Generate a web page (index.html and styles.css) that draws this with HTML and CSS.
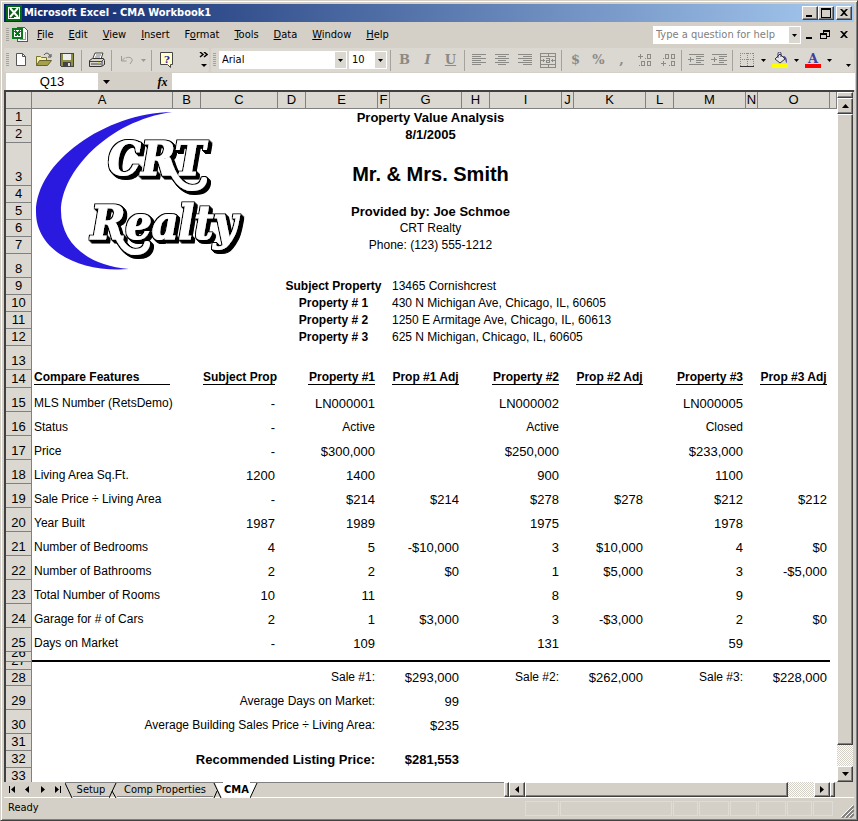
FILE: index.html
```html
<!DOCTYPE html>
<html lang="en">
<head>
<meta charset="utf-8">
<title>Microsoft Excel - CMA Workbook1</title>
<link rel="stylesheet" href="styles.css">
</head>
<body>
<div class="window">
  <header class="titlebar">
    <svg class="app-icon" width="16" height="16" viewBox="0 0 16 16" shape-rendering="crispEdges"><rect width="16" height="16" fill="#006a10"/><path d="M2 2h12v12H2z" fill="#fff"/><path d="M3 3h10v10H3z" fill="#0a5c18"/><path d="M4 3l8 9M12 3l-8 9" stroke="#fff" stroke-width="2" shape-rendering="auto"/><path d="M8 12h5v2H8z" fill="#fff"/></svg>
    <h1 class="title">Microsoft Excel - CMA Workbook1</h1>
    <button class="win-btn" aria-label="Minimize"><svg width="12" height="10"><path d="M2 7h6v2H2z"/></svg></button>
    <button class="win-btn" aria-label="Maximize"><svg width="12" height="10"><path d="M1 0h10v10H1zM2 2v7h8V2z" fill-rule="evenodd"/></svg></button>
    <button class="win-btn close" aria-label="Close"><svg width="12" height="10"><path d="M2 1h2l2 2 2-2h2L7 4.500l3 3.500H8L6 6 4 8H2l3-3.500z"/></svg></button>
  </header>

  <nav class="menubar">
    <span class="grip"></span>
    <svg class="doc-icon" width="17" height="16" viewBox="0 0 17 16" shape-rendering="crispEdges"><path d="M5.500 .5h7l3 3v11h-10z" fill="#fff" stroke="#555"/><path d="M8 12.500h6M13.500 5v8" stroke="#999"/><rect x="0" y="1" width="11" height="11" fill="#087a1c"/><rect x="2" y="3" width="7" height="7" fill="#fff"/><path d="M3 4l5 5M8 4l-5 5" stroke="#087a1c" stroke-width="2"/></svg>
    <button class="menu"><u>F</u>ile</button><button class="menu"><u>E</u>dit</button><button class="menu"><u>V</u>iew</button><button class="menu"><u>I</u>nsert</button><button class="menu">F<u>o</u>rmat</button><button class="menu"><u>T</u>ools</button><button class="menu"><u>D</u>ata</button><button class="menu"><u>W</u>indow</button><button class="menu"><u>H</u>elp</button>
    <span class="combo help"><input type="text" aria-label="Ask a question" placeholder="Type a question for help"><button class="drop" aria-label="Show questions"><svg width="5" height="3"><path d="M0 0h5L2.500 3z"/></svg></button></span>
    <button class="doc-btn" aria-label="Minimize workbook"><svg width="12" height="10"><path d="M3 7h6v2H3z"/></svg></button>
    <button class="doc-btn" aria-label="Restore workbook"><svg width="12" height="10" shape-rendering="crispEdges"><path d="M4.500 1v2M10.500 1v5.500H8M1.500 4v4.500h6V4" fill="none" stroke="#000"/><path d="M4 0h7v2H4zM1 3h7v2H1z"/></svg></button>
    <button class="doc-btn last" aria-label="Close workbook"><svg width="12" height="10"><path d="M2 1h2l2 2 2-2h2L7 4.500l3 3.500H8L6 6 4 8H2l3-3.500z"/></svg></button>
  </nav>

  <div class="toolbars">
    <div class="toolbar standard">
      <span class="grip"></span>
      <button class="tool" aria-label="New"><svg width="16" height="16" viewBox="0 0 16 16"><path d="M3.500 1.500h6l3 3v9h-9z" fill="#fff" stroke="#555"/><path d="M9.500 1.500v3h3" fill="none" stroke="#555"/></svg></button>
      <button class="tool" aria-label="Open"><svg width="18" height="16" viewBox="0 0 18 16"><path d="M1.500 13.500v-9h4l1 1h5v3" fill="#f6efb0" stroke="#777432"/><path d="M1.500 13.500l3-5h12l-4 5z" fill="#a5a14b" stroke="#66622c"/><path d="M9 3c2-3 5-2 6 1m1-2v3h-3" fill="none" stroke="#444"/></svg></button>
      <button class="tool" aria-label="Save"><svg width="16" height="16" viewBox="0 0 16 16" shape-rendering="crispEdges"><path d="M1.500 1.500h13v13h-12l-1-1z" fill="#8f8d42" stroke="#444"/><path d="M4 2h8v6H4z" fill="#eee"/><path d="M4 10h8v4H4z" fill="#444"/><path d="M9 11h2v3H9z" fill="#ddd"/></svg></button>
      <span class="sep"></span>
      <button class="tool print" aria-label="Print"><svg width="18" height="16" viewBox="0 0 18 16"><path d="M5 6l2-5h8l-2 6" fill="#fff" stroke="#444"/><path d="M8 3h5M7 5h5" stroke="#777"/><path d="M1.500 8.500l3-2h11l1 2v4l-3 2h-12z" fill="#d8d5cc" stroke="#333"/><path d="M2 9.500h12M14 14V9l2-2M3 12h10" fill="none" stroke="#444"/><path d="M10 11h2" stroke="#cc0"/></svg></button>
      <span class="sep"></span>
      <button class="tool" aria-label="Undo"><svg width="14" height="12" viewBox="0 0 14 12"><path d="M1.500 2v5h5M2 6.500l3-3M6 4c4-2 7 1 6 3l-2 3" fill="none" stroke="#999"/></svg></button>
      <button class="arrow" aria-label="Undo list"><svg width="5" height="3"><path d="M0 0h5L2.500 3z" fill="#999"/></svg></button>
      <span class="sep"></span>
      <button class="tool" aria-label="Help"><svg width="16" height="16" viewBox="0 0 16 16"><path d="M1.500 .5h12v12h-2v3l-3-3h-7z" fill="#ffffc8" stroke="#444"/><text x="8" y="11" class="help-mark">?</text></svg></button>
      <button class="overflow" aria-label="More buttons"><svg width="9" height="16"><path d="M1 0l3 2.500L1 5M5 0l3 2.500L5 5" fill="none" stroke="#000" stroke-width="1.500"/><path d="M2 12h6l-3 3z"/></svg></button>
    </div>
    <div class="toolbar format">
      <span class="grip"></span>
      <span class="combo font"><select aria-label="Font"><option>Arial</option></select><span class="drop"><svg width="5" height="3"><path d="M0 0h5L2.500 3z"/></svg></span></span>
      <span class="combo size"><select aria-label="Font size"><option>10</option></select><span class="drop"><svg width="5" height="3"><path d="M0 0h5L2.500 3z"/></svg></span></span>
      <span class="sep"></span>
      <button class="tool glyph" aria-label="Bold">B</button>
      <button class="tool glyph italic" aria-label="Italic">I</button>
      <button class="tool glyph underline" aria-label="Underline">U</button>
      <span class="sep"></span>
      <button class="tool" aria-label="Align left"><svg width="14" height="12" shape-rendering="crispEdges"><path d="M0 .5h14M0 2.500h9M0 4.500h14M0 6.500h9M0 8.500h14M0 10.500h9" class="line"/></svg></button>
      <button class="tool" aria-label="Center"><svg width="14" height="12" shape-rendering="crispEdges"><path d="M0 .5h14M3 2.500h8M0 4.500h14M3 6.500h8M0 8.500h14M3 10.500h8" class="line"/></svg></button>
      <button class="tool" aria-label="Align right"><svg width="14" height="12" shape-rendering="crispEdges"><path d="M0 .5h14M5 2.500h9M0 4.500h14M5 6.500h9M0 8.500h14M5 10.500h9" class="line"/></svg></button>
      <button class="tool" aria-label="Merge and center"><svg width="16" height="15" shape-rendering="crispEdges"><path d="M.5 .5h15v14H.5zM1 3.500h14M1 11.500h14M8.500 0v3M8.500 12v3M1 7.500h4M11 7.500h4M3.500 6v3M12.500 6v3M6 5.500h3.500v4H6.500v-2h3" class="line"/></svg></button>
      <span class="sep"></span>
      <button class="tool glyph" aria-label="Currency">$</button>
      <button class="tool glyph" aria-label="Percent">%</button>
      <button class="tool glyph comma" aria-label="Comma">,</button>
      <button class="tool" aria-label="Increase decimal"><svg width="16" height="14" shape-rendering="crispEdges"><path d="M1 3.500h5M3.500 1v5M8 5.500h1M10.500 1.500h3v4h-3zM2 12.500h1M4.500 8.500h3v4h-3zM10.500 8.500h3v4h-3z" class="line"/></svg></button>
      <button class="tool" aria-label="Decrease decimal"><svg width="16" height="14" shape-rendering="crispEdges"><path d="M3 5.500h1M5.500 1.500h3v4h-3zM11.500 1.500h3v4h-3zM1 10.500h5M3.500 8v5M9 12.500h1M11.500 8.500h3v4h-3z" class="line"/></svg></button>
      <span class="sep"></span>
      <button class="tool" aria-label="Decrease indent"><svg width="16" height="13" shape-rendering="crispEdges"><path d="M1 .5h15M8 2.500h8M8 4.500h5M8 6.500h8M8 8.500h5M1 10.500h15M0 5.500h6M2.500 3v5" class="line"/></svg></button>
      <button class="tool" aria-label="Increase indent"><svg width="16" height="13" shape-rendering="crispEdges"><path d="M1 .5h15M8 2.500h8M8 4.500h5M8 6.500h8M8 8.500h5M1 10.500h15M0 5.500h6M3.500 3v5" class="line"/></svg></button>
      <span class="sep"></span>
      <button class="tool" aria-label="Borders"><svg width="14" height="14" shape-rendering="crispEdges"><path d="M.5 0v13M13.500 0v13M7.500 0v13M0 .5h14M0 6.500h14" stroke="#888" stroke-dasharray="1 1"/><path d="M0 13.500h14" stroke="#333"/></svg></button>
      <button class="arrow" aria-label="Border list"><svg width="5" height="3"><path d="M0 0h5L2.500 3z"/></svg></button>
      <button class="tool color" aria-label="Fill color"><svg width="16" height="16" viewBox="0 0 16 16"><path d="M0 12h16v4H0z" fill="#ff0"/><path d="M3 7l5-5 5 5-5 4z" fill="#e8e8e8" stroke="#333"/><path d="M6 6V1.500c0-2 3-2 3 0V5" fill="none" stroke="#333366"/><path d="M11 4c3 0 4 2 4 7-2-1-1-4-3-5z" fill="#4848a8"/></svg></button>
      <button class="arrow" aria-label="Fill color list"><svg width="5" height="3"><path d="M0 0h5L2.500 3z"/></svg></button>
      <button class="tool color" aria-label="Font color"><svg width="16" height="16" viewBox="0 0 16 16"><path d="M0 12h16v4H0z" fill="#f00"/><text x="8" y="11" class="color-a">A</text></svg></button>
      <button class="arrow" aria-label="Font color list"><svg width="5" height="3"><path d="M0 0h5L2.500 3z"/></svg></button>
      <button class="overflow end" aria-label="Toolbar options"><svg width="5" height="3"><path d="M0 0h5L2.500 3z"/></svg></button>
    </div>
  </div>

  <div class="formulabar">
    <input class="namebox" type="text" aria-label="Name box" value="Q13">
    <button class="namedrop" aria-label="Names"><svg width="7" height="4"><path d="M0 0h7L3.500 4z"/></svg></button>
    <button class="fx" aria-label="Insert function"><i>f</i>x</button>
    <input class="formula" type="text" aria-label="Formula">
  </div>

  <main class="workbook">
    <div class="sheet">
      <svg class="logo" width="220" height="165" viewBox="32 109 220 165" aria-hidden="true">
        <defs>
          <filter id="relief" x="-15%" y="-20%" width="130%" height="150%">
            <feMorphology in="SourceAlpha" operator="dilate" radius="1" result="edge"/>
            <feOffset in="edge" dx="1" dy="1" result="s1"/>
            <feOffset in="edge" dx="2" dy="2" result="s2"/>
            <feOffset in="edge" dx="3" dy="3" result="s3"/>
            <feMerge><feMergeNode in="s3"/><feMergeNode in="s2"/><feMergeNode in="s1"/><feMergeNode in="edge"/><feMergeNode in="SourceGraphic"/></feMerge>
          </filter>
        </defs>
        <path d="M172 112C105 113 36 162 36 212C36 250 78 273 129 269C88 266 61 243 61 211C61 172 108 121 172 112z" fill="#2a1ae0"/>
        <g filter="url(#relief)">
          <path d="M168 160C173 176 180 188 192 188C199 188 203 185 204 180" class="swash"/>
          <text x="108" y="175" class="logo-text">CRT</text>
        </g>
        <g filter="url(#relief)">
          <path d="M113 224C118 240 125 252 135 252C142 252 146 249 147 244" class="swash"/>
          <text x="91" y="239" class="logo-text">Realty</text>
        </g>
      </svg>
      <table class="grid">
        <colgroup><col class="c-head"><col class="c-a"><col class="c-gap"><col class="c-c"><col class="c-gap"><col class="c-val"><col class="c-thin"><col class="c-val"><col class="c-gap"><col class="c-val"><col class="c-thin"><col class="c-val"><col class="c-gap"><col class="c-val"><col class="c-thin"><col class="c-val"><col></colgroup>
        <thead><tr><th></th><th>A</th><th>B</th><th>C</th><th>D</th><th>E</th><th>F</th><th>G</th><th>H</th><th>I</th><th>J</th><th>K</th><th>L</th><th>M</th><th>N</th><th>O</th><th></th></tr></thead>
        <tbody>
          <tr class="h17 center strong"><th>1</th><td colspan="15">Property Value Analysis</td><td></td></tr>
          <tr class="h17 center strong"><th>2</th><td colspan="15">8/1/2005</td><td></td></tr>
          <tr class="h43 center client"><th>3</th><td colspan="15">Mr. &amp; Mrs. Smith</td><td></td></tr>
          <tr class="h17"><th>4</th><td colspan="15"></td><td></td></tr>
          <tr class="h17 center strong"><th>5</th><td colspan="15">Provided by: Joe Schmoe</td><td></td></tr>
          <tr class="h17 center contact"><th>6</th><td colspan="15">CRT Realty</td><td></td></tr>
          <tr class="h17 center contact"><th>7</th><td colspan="15">Phone: (123) 555-1212</td><td></td></tr>
          <tr class="h24"><th>8</th><td colspan="15"></td><td></td></tr>
          <tr class="h17 subject"><th>9</th><td colspan="3"></td><td colspan="3" class="name">Subject Property</td><td colspan="9" class="text">13465 Cornishcrest</td><td></td></tr>
          <tr class="h17 subject"><th>10</th><td colspan="3"></td><td colspan="3" class="name">Property # 1</td><td colspan="9" class="text">430 N Michigan Ave, Chicago, IL, 60605</td><td></td></tr>
          <tr class="h17 subject"><th>11</th><td colspan="3"></td><td colspan="3" class="name">Property # 2</td><td colspan="9" class="text">1250 E Armitage Ave, Chicago, IL, 60613</td><td></td></tr>
          <tr class="h17 subject"><th>12</th><td colspan="3"></td><td colspan="3" class="name">Property # 3</td><td colspan="9" class="text">625 N Michigan, Chicago, IL, 60605</td><td></td></tr>
          <tr class="h24"><th>13</th><td colspan="15"></td><td></td></tr>
          <tr class="h18 heads"><th>14</th><td class="text"><span>Compare Features</span></td><td></td><td><span>Subject Prop</span></td><td></td><td><span>Property #1</span></td><td></td><td class="mid"><span>Prop #1 Adj</span></td><td></td><td><span>Property #2</span></td><td></td><td class="mid"><span>Prop #2 Adj</span></td><td></td><td><span>Property #3</span></td><td></td><td class="mid"><span>Prop #3 Adj</span></td><td></td></tr>
          <tr class="h24"><th>15</th><td class="text">MLS Number (RetsDemo)</td><td></td><td>-</td><td></td><td>LN000001</td><td></td><td></td><td></td><td>LN000002</td><td></td><td></td><td></td><td>LN000005</td><td></td><td></td><td></td></tr>
          <tr class="h24"><th>16</th><td class="text">Status</td><td></td><td>-</td><td></td><td class="label">Active</td><td></td><td></td><td></td><td class="label">Active</td><td></td><td></td><td></td><td class="label">Closed</td><td></td><td></td><td></td></tr>
          <tr class="h24"><th>17</th><td class="text">Price</td><td></td><td>-</td><td></td><td>$300,000</td><td></td><td></td><td></td><td>$250,000</td><td></td><td></td><td></td><td>$233,000</td><td></td><td></td><td></td></tr>
          <tr class="h24"><th>18</th><td class="text">Living Area Sq.Ft.</td><td></td><td>1200</td><td></td><td>1400</td><td></td><td></td><td></td><td>900</td><td></td><td></td><td></td><td>1100</td><td></td><td></td><td></td></tr>
          <tr class="h24"><th>19</th><td class="text">Sale Price ÷ Living Area</td><td></td><td>-</td><td></td><td>$214</td><td></td><td>$214</td><td></td><td>$278</td><td></td><td>$278</td><td></td><td>$212</td><td></td><td>$212</td><td></td></tr>
          <tr class="h24"><th>20</th><td class="text">Year Built</td><td></td><td>1987</td><td></td><td>1989</td><td></td><td></td><td></td><td>1975</td><td></td><td></td><td></td><td>1978</td><td></td><td></td><td></td></tr>
          <tr class="h24"><th>21</th><td class="text">Number of Bedrooms</td><td></td><td>4</td><td></td><td>5</td><td></td><td>-$10,000</td><td></td><td>3</td><td></td><td>$10,000</td><td></td><td>4</td><td></td><td>$0</td><td></td></tr>
          <tr class="h24"><th>22</th><td class="text">Number of Bathrooms</td><td></td><td>2</td><td></td><td>2</td><td></td><td>$0</td><td></td><td>1</td><td></td><td>$5,000</td><td></td><td>3</td><td></td><td>-$5,000</td><td></td></tr>
          <tr class="h24"><th>23</th><td class="text">Total Number of Rooms</td><td></td><td>10</td><td></td><td>11</td><td></td><td></td><td></td><td>8</td><td></td><td></td><td></td><td>9</td><td></td><td></td><td></td></tr>
          <tr class="h24"><th>24</th><td class="text">Garage for # of Cars</td><td></td><td>2</td><td></td><td>1</td><td></td><td>$3,000</td><td></td><td>3</td><td></td><td>-$3,000</td><td></td><td>2</td><td></td><td>$0</td><td></td></tr>
          <tr class="h24"><th>25</th><td class="text">Days on Market</td><td></td><td>-</td><td></td><td>109</td><td></td><td></td><td></td><td>131</td><td></td><td></td><td></td><td>59</td><td></td><td></td><td></td></tr>
          <tr class="h10"><th><div class="clip">26</div></th><td colspan="15" class="rule"></td><td></td></tr>
          <tr class="h8"><th><div class="clip">27</div></th><td colspan="15"></td><td></td></tr>
          <tr class="h16"><th>28</th><td colspan="5" class="label">Sale #1:</td><td></td><td>$293,000</td><td></td><td class="label">Sale #2:</td><td></td><td>$262,000</td><td></td><td class="label">Sale #3:</td><td></td><td>$228,000</td><td></td></tr>
          <tr class="h24"><th>29</th><td colspan="5" class="label">Average Days on Market:</td><td></td><td>99</td><td colspan="9"></td></tr>
          <tr class="h24"><th>30</th><td colspan="5" class="label">Average Building Sales Price ÷ Living Area:</td><td></td><td>$235</td><td colspan="9"></td></tr>
          <tr class="h17"><th>31</th><td colspan="16"></td></tr>
          <tr class="h17 strong"><th>32</th><td colspan="5" class="total">Recommended Listing Price:</td><td></td><td>$281,553</td><td colspan="9"></td></tr>
          <tr class="h17"><th>33</th><td colspan="16"></td></tr>
        </tbody>
      </table>
    </div>
    <div class="vscroll">
      <span class="vsplit"></span>
      <button class="bar-btn" aria-label="Scroll up"><svg width="7" height="4"><path d="M3.500 0L7 4H0z"/></svg></button>
      <span class="vthumb"></span>
      <span class="track"></span>
      <button class="bar-btn" aria-label="Scroll down"><svg width="7" height="4"><path d="M0 0h7L3.500 4z"/></svg></button>
    </div>
  </main>

  <div class="bottom">
    <button class="nav" aria-label="First sheet"><svg width="7" height="7"><path d="M0 0h1v7H0zM6 0v7L2 3.500z"/></svg></button>
    <button class="nav" aria-label="Previous sheet"><svg width="7" height="7"><path d="M5 0v7L1 3.500z"/></svg></button>
    <button class="nav" aria-label="Next sheet"><svg width="7" height="7"><path d="M2 0v7l4-3.500z"/></svg></button>
    <button class="nav" aria-label="Last sheet"><svg width="7" height="7"><path d="M6 0h1v7H6zM1 0v7l4-3.500z"/></svg></button>
    <div class="tabs">
      <svg width="8" height="15"><path d="M0 0l7 15" class="slant"/></svg>
      <button class="tab setup">Setup</button>
      <svg width="8" height="15"><path d="M7 0L0 15M3 8l4 7" class="slant"/></svg>
      <button class="tab comp">Comp Properties</button>
      <svg width="10" height="15"><path d="M2 0h8v15H9z" fill="#fff"/><path d="M1 0l7 15M4 8L1 15" class="slant"/></svg>
      <button class="tab active">CMA</button>
      <svg width="8" height="15"><path d="M0 0h7L0 15z" fill="#fff"/><path d="M7 0L0 15" class="slant"/></svg>
    </div>
    <div class="hscroll">
      <span class="hsplit"></span>
      <button class="bar-btn" aria-label="Scroll left"><svg width="4" height="7"><path d="M4 0v7L0 3.500z"/></svg></button>
      <span class="hthumb"></span>
      <span class="track"></span>
      <button class="bar-btn" aria-label="Scroll right"><svg width="4" height="7"><path d="M0 0v7l4-3.500z"/></svg></button>
      <span class="hsplit"></span>
    </div>
  </div>

  <footer class="status">
    <span class="ready">Ready</span>
    <span class="pane p34"></span><span class="pane p112"></span><span class="pane p25"></span><span class="pane p30"></span><span class="pane p27"></span><span class="pane p29"></span><span class="pane p25"></span><span class="pane p20"></span>
    <svg class="size-grip" width="13" height="13"><path d="M1 13L13 1M5 13l8-8M9 13l4-4" stroke="#808080" stroke-width="2"/><path d="M0 12L12 0M4 12l8-8M8 12l4-4" stroke="#fff"/></svg>
  </footer>
</div>
</body>
</html>
```
FILE: styles.css
```css
* { box-sizing: border-box; }

body {
  margin: 0;
  height: 100vh;
  overflow: hidden;
  background: #d4d0c8;
  color: #000;
  font: 11px/14px "DejaVu Sans Condensed", "Noto Sans", sans-serif;
}

button, input, select {
  margin: 0;
  padding: 0;
  border: 0;
  border-radius: 0;
  background: none;
  color: inherit;
  font: inherit;
}

button {
  display: flex;
  align-items: center;
  justify-content: center;
  flex: none;
}

svg { display: block; flex: none; }

.window {
  height: 100%;
  display: flex;
  flex-direction: column;
  padding: 2px;
  border: 1px solid;
  border-color: #d4d0c8 #404040 #404040 #d4d0c8;
  box-shadow: inset 1px 1px #fff, inset -1px -1px #808080;
}

/* Title bar */
.titlebar {
  flex: none;
  display: flex;
  align-items: center;
  height: 18px;
  margin: 1px 1px 0;
  padding: 0 2px;
  background: linear-gradient(90deg, #0a246a, #a6caf0);
}
.title {
  flex: 1;
  margin: 0 0 0 2px;
  color: #fff;
  font-size: 11px;
  font-weight: bold;
}
.win-btn, .bar-btn {
  background: #d4d0c8;
  border: 1px solid;
  border-color: #fff #404040 #404040 #fff;
  box-shadow: inset -1px -1px #808080;
}
.win-btn { width: 16px; height: 14px; }
.win-btn.close { margin-left: 2px; }

/* Menu bar */
.grip {
  flex: none;
  width: 3px;
  height: 14px;
  background: repeating-linear-gradient(#a5a29b 0 1px, transparent 1px 2px);
}
.menubar {
  flex: none;
  display: flex;
  align-items: center;
  height: 26px;
  padding: 0 3px;
}
.doc-icon { margin: 0 0 0 3px; }
.menu { margin-left: 7px; padding: 0 4px; display: block; }
.doc-icon + .menu { margin-left: 4px; }
.combo {
  display: flex;
  flex: none;
  height: 18px;
  background: #fff;
  border: 1px solid #fff;
}
.combo input, .combo select {
  flex: 1;
  min-width: 0;
  padding: 0 2px;
  appearance: none;
}
.combo input::placeholder { color: #808080; opacity: 1; }
.combo .drop {
  width: 11px;
  flex: none;
  display: flex;
  align-items: center;
  justify-content: center;
  background: #dbd8d1;
  pointer-events: none;
}
.help { width: 148px; margin-left: auto; }
.doc-btn { width: 16px; height: 16px; }
.doc-btn.last { margin-left: 3px; }

/* Toolbars */
.toolbars { flex: none; display: flex; gap: 2px; height: 24px; margin: 0 1px; }
.toolbar {
  display: flex;
  align-items: center;
  background: #dbd8d1;
  border-radius: 2px;
  padding-left: 2px;
}
.standard { width: 205px; }
.format { flex: 1; }
.sep { flex: none; width: 1px; height: 21px; margin: 0 3px; background: #a5a29b; }
.format .sep { margin: 0 2px; }
.tool { width: 23px; height: 22px; }
.print { width: 23px; }
.arrow { width: 10px; height: 22px; }
.overflow { width: 12px; height: 22px; margin-left: auto; }
.overflow.end { padding-top: 10px; }
.font { width: 128px; margin: 0 1px 0 3px; }
.size { width: 38px; margin: 0 1px; }
.glyph {
  color: #8c8a85;
  font: bold 13px/16px "DejaVu Serif", serif;
}
.italic { font-style: italic; }
.underline { text-decoration: underline; }
.line { fill: none; stroke: #8c8a85; }
.help-mark { font: bold 10px "DejaVu Serif", serif; text-anchor: middle; fill: #2020a0; }
.color-a { font: bold 13px "DejaVu Serif", serif; text-anchor: middle; fill: #4040a0; }

/* Formula bar */
.formulabar {
  flex: none;
  display: flex;
  height: 18px;
  padding: 1px 0 0 3px;
}
.namebox {
  width: 92px;
  background: #fff;
  text-align: center;
  font: 13px/16px "Liberation Sans", Arial, sans-serif;
}
.namedrop { width: 17px; }
.fx {
  width: 19px;
  margin-left: 38px;
  font: italic bold 12px/14px "Liberation Serif", serif;
}
.formula { flex: 1; background: #fff; }

/* Worksheet */
.workbook {
  flex: 1;
  min-height: 0;
  display: flex;
  margin: 0 1px;
  border: solid #404040;
  border-width: 2px 0 0 2px;
  background: #fff;
}
.sheet {
  position: relative;
  flex: 1;
  min-width: 0;
  overflow: hidden;
  font: 13px/15px "Liberation Sans", Arial, sans-serif;
}
.logo { position: absolute; left: 26px; top: 17px; }
.logo-text {
  font: italic bold 46px "DejaVu Serif Condensed", "DejaVu Serif", serif;
  fill: #fff;
  stroke: #fff;
  stroke-width: 1px;
}
.swash { fill: none; stroke: #fff; stroke-width: 6px; stroke-linecap: round; }
.grid {
  width: 100%;
  table-layout: fixed;
  border-collapse: separate;
  border-spacing: 0;
}
.c-head { width: 26px; }
.c-a { width: 141px; }
.c-gap { width: 28px; }
.c-c { width: 77px; }
.c-val { width: 72px; }
.c-thin { width: 12px; }
.grid th {
  padding: 0;
  background: #dbd8d1;
  border: solid #808080;
  border-width: 0 1px 1px 0;
  font-size: 13px;
  font-weight: normal;
  line-height: 16px;
}
.grid thead th { height: 17px; }
.grid tbody th { vertical-align: bottom; }
.grid td {
  padding: 0 3px 1px 2px;
  text-align: right;
  vertical-align: bottom;
  white-space: nowrap;
}
.h8 { height: 8px; }
.h10 { height: 10px; }
.h16 { height: 16px; }
.h17 { height: 17px; }
.h18 { height: 18px; }
.h24 { height: 24px; }
.h43 { height: 43px; }
.h16 th { line-height: 15px; }
.grid .center td { text-align: center; }
.strong td, .grid .name { font-weight: bold; }
.client td { font-size: 20px; font-weight: bold; line-height: 22px; }
.contact td, .grid .name, .grid .text, .grid .label { font-size: 12px; }
.grid .name { text-align: center; }
.grid .text { text-align: left; }
.grid .heads td { padding-bottom: 3px; font-size: 12px; font-weight: bold; line-height: 14px; }
.grid .heads th { vertical-align: middle; }
.heads span { display: block; border-bottom: 1px solid #000; }
.grid .heads .mid { text-align: center; }
.grid .rule { border-bottom: 2px solid #000; padding: 0; }
.grid .h8 td, .grid .h10 td { padding: 0; line-height: 0; }
.clip {
  display: flex;
  align-items: flex-end;
  justify-content: center;
  overflow: hidden;
}
.h10 .clip { height: 9px; }
.h8 .clip { height: 7px; }

/* Scroll bars */
.track { background: repeating-conic-gradient(#fff 0 25%, #d4d0c8 0 50%) 0 0 / 2px 2px; }
.vscroll {
  flex: none;
  display: flex;
  flex-direction: column;
  width: 17px;
  border-right: 1px solid #d4d0c8;
}
.vsplit, .hsplit, .vthumb, .hthumb {
  background: #d4d0c8;
  border: 1px solid;
  border-color: #fff #404040 #404040 #fff;
  box-shadow: inset -1px -1px #808080;
}
.vsplit { height: 6px; }
.vscroll .bar-btn { height: 16px; }
.vthumb { flex: 30; }
.vscroll .track { flex: 1; }

/* Sheet tabs */
.bottom {
  flex: none;
  display: flex;
  height: 16px;
  margin: 0 1px;
  padding-left: 1px;
  border-bottom: 1px solid #fff;
}
.nav { width: 15px; }
.tabs { flex: 1; display: flex; border-top: 1px solid #808080; }
.tab { height: 14px; border-bottom: 1px solid #808080; }
.setup { width: 36px; }
.comp { width: 96px; }
.tab.active { width: 27px; height: 15px; margin-top: -1px; border: 0; background: #fff; font-weight: bold; }
.slant { fill: none; stroke: #000; }
.hscroll { flex: none; width: 39%; display: flex; margin-right: 19px; }
.hsplit { width: 5px; }
.hscroll .bar-btn { width: 16px; }
.hthumb { flex: 10; }
.hscroll .track { flex: 1; }

/* Status bar */
.status {
  flex: none;
  display: flex;
  align-items: center;
  gap: 1px;
  height: 20px;
  padding: 0 1px 0 5px;
}
.ready { flex: 1; }
.pane { height: 15px; border: 1px solid #dfdcd5; }
.p20 { width: 20px; }
.p25 { width: 25px; }
.p27 { width: 27px; }
.p29 { width: 28px; }
.p30 { width: 30px; }
.p34 { width: 34px; }
.p112 { width: 112px; }
.size-grip { align-self: flex-end; margin-left: 7px; }
```
